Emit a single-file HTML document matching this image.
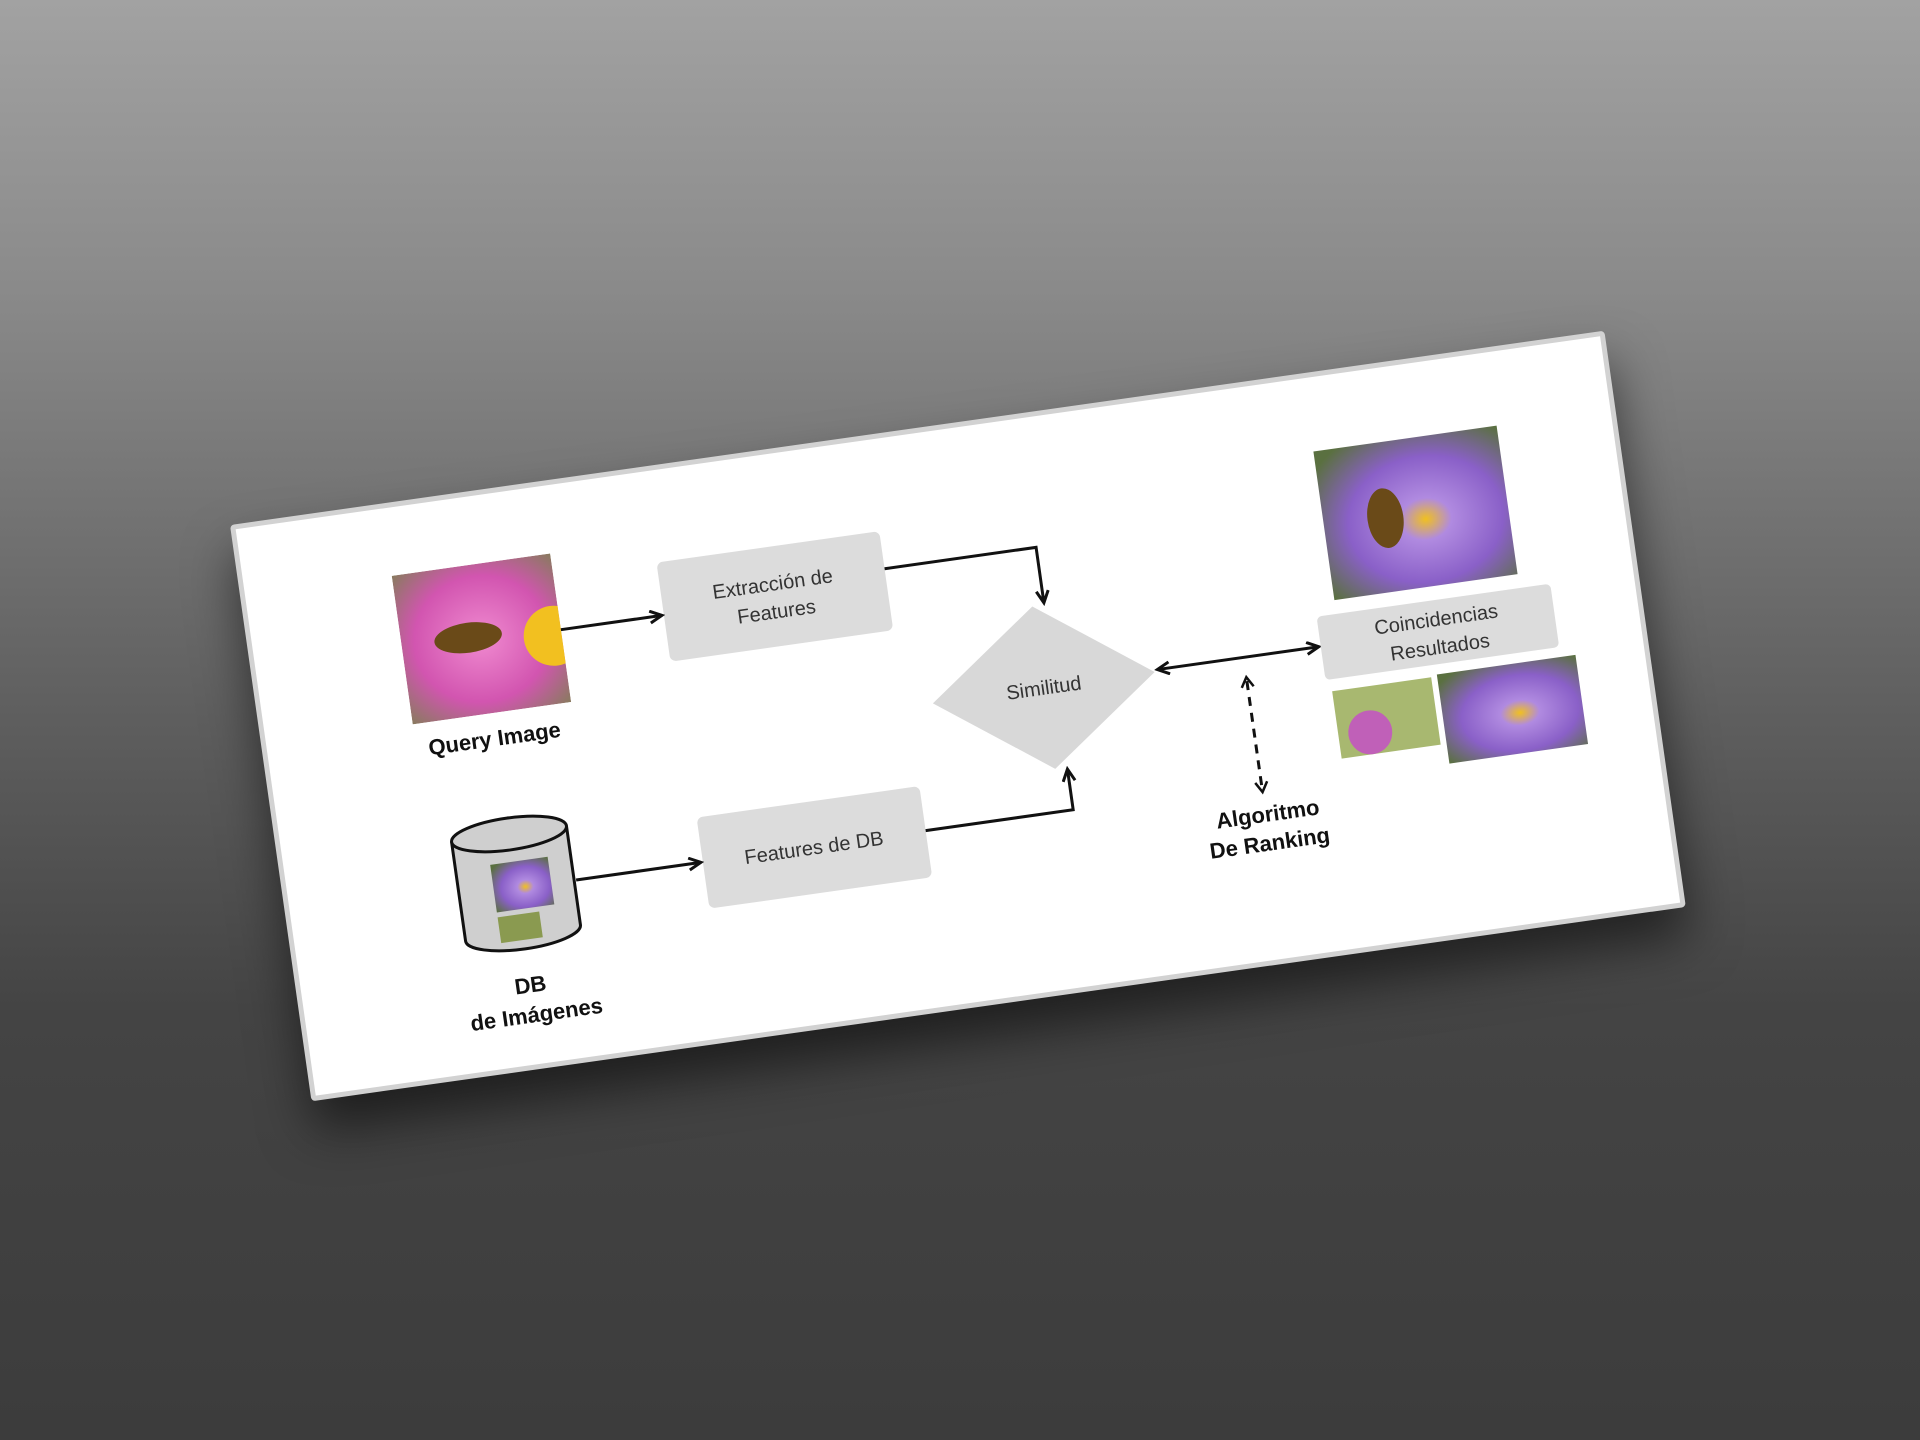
<!DOCTYPE html>
<html><head><meta charset="utf-8"><style>
html,body{margin:0;padding:0}
body{width:1920px;height:1440px;overflow:hidden;background:linear-gradient(180deg,#a2a2a2 0%,#8a8a8a 20%,#5e5e5e 50%,#444 70%,#3c3c3c 100%);position:relative;font-family:"Liberation Sans",sans-serif}
#card{position:absolute;left:230px;top:525px;width:1388px;height:582px;transform-origin:0 0;transform:rotate(-8.05deg);background:#fff;box-sizing:border-box;border:5px solid #d2d2d2;border-radius:4px;box-shadow:0 30px 50px rgba(0,0,0,.55)}
svg{position:absolute;left:0;top:0}
</style></head><body>
<div id="card">
<svg width="1385" height="581" viewBox="0 0 1385 581">
<defs>
<radialGradient id="pink" cx="0.5" cy="0.5" r="0.7"><stop offset="0" stop-color="#f08ad0"/><stop offset="0.6" stop-color="#d255b0"/><stop offset="1" stop-color="#8a7a60"/></radialGradient>
<radialGradient id="purp" cx="0.55" cy="0.55" r="0.7"><stop offset="0" stop-color="#f0c020"/><stop offset="0.2" stop-color="#b08ae0"/><stop offset="0.6" stop-color="#8a60c8"/><stop offset="1" stop-color="#5a7040"/></radialGradient>
<clipPath id="qc"><rect x="148" y="68" width="160" height="150"/></clipPath>
<marker id="ah" markerUnits="userSpaceOnUse" markerWidth="16" markerHeight="16" refX="13" refY="7" orient="auto-start-reverse"><path d="M1,1 L13,7 L1,13" fill="none" stroke="#111" stroke-width="3"/></marker>
</defs>
<g clip-path="url(#qc)">
<rect x="148" y="68" width="160" height="150" fill="url(#pink)"/>
<circle cx="300" cy="150" r="30" fill="#f2c020"/>
<ellipse cx="215" cy="140" rx="34" ry="15" fill="#6a4a18"/>
</g>
<text x="227" y="251" font-size="22" font-weight="bold" text-anchor="middle" fill="#111">Query Image</text>
<rect x="412" y="92" width="225" height="100" rx="6" fill="#dcdcdc"/>
<text x="524" y="136" font-size="20" text-anchor="middle" fill="#333">Extracción de</text>
<text x="524" y="164" font-size="20" text-anchor="middle" fill="#333">Features</text>
<rect x="416" y="350" width="225" height="92" rx="6" fill="#dcdcdc"/>
<text x="528" y="403" font-size="20" text-anchor="middle" fill="#333">Features de DB</text>
<polygon points="778,188 890,270 778,352 666,270" fill="#d8d8d8"/>
<text x="778" y="277" font-size="20" text-anchor="middle" fill="#333">Similitud</text>
<path d="M170,340 L170,440 A58,16 0 0 0 286,440 L286,340" fill="#cfcfcf" stroke="#111" stroke-width="3"/>
<ellipse cx="228" cy="340" rx="58" ry="16" fill="#cfcfcf" stroke="#111" stroke-width="3"/>
<rect x="205" y="368" width="58" height="48" fill="url(#purp)"/>
<rect x="205" y="421" width="42" height="26" fill="#8a9a50"/>
<text x="228" y="500" font-size="22" font-weight="bold" text-anchor="middle" fill="#111">DB</text>
<text x="230" y="530" font-size="22" font-weight="bold" text-anchor="middle" fill="#111">de Imágenes</text>
<line x1="308" y1="145" x2="410" y2="145" stroke="#111" stroke-width="3" marker-end="url(#ah)"/>
<polyline points="637,130 790,130 790,186" fill="none" stroke="#111" stroke-width="3" marker-end="url(#ah)"/>
<line x1="288" y1="395" x2="414" y2="395" stroke="#111" stroke-width="3" marker-end="url(#ah)"/>
<polyline points="641,395 790,395 790,354" fill="none" stroke="#111" stroke-width="3" marker-end="url(#ah)"/>
<line x1="893" y1="268" x2="1056" y2="268" stroke="#111" stroke-width="3" marker-end="url(#ah)" marker-start="url(#ah)"/>
<line x1="980" y1="292" x2="980" y2="400" stroke="#111" stroke-width="3" stroke-dasharray="9,7"/>
<path d="M974,298 L980,288 L986,298 M974,394 L980,404 L986,394" fill="none" stroke="#111" stroke-width="2.5"/>
<text x="982" y="434" font-size="22" font-weight="bold" text-anchor="middle" fill="#111">Algoritmo</text>
<text x="980" y="463" font-size="22" font-weight="bold" text-anchor="middle" fill="#111">De Ranking</text>
<rect x="1078" y="74" width="185" height="150" fill="url(#purp)"/>
<ellipse cx="1140" cy="150" rx="18" ry="30" fill="#6a4a18"/>
<rect x="1058" y="238" width="236" height="64" rx="5" fill="#dcdcdc"/>
<text x="1176" y="264" font-size="20" text-anchor="middle" fill="#333">Coincidencias</text>
<text x="1176" y="292" font-size="20" text-anchor="middle" fill="#333">Resultados</text>
<rect x="1063" y="314" width="100" height="68" fill="#a8b870"/>
<circle cx="1095" cy="360" r="22" fill="#c060b8"/>
<rect x="1169" y="312" width="140" height="90" fill="url(#purp)"/>
</svg>
</div>
</body></html>
